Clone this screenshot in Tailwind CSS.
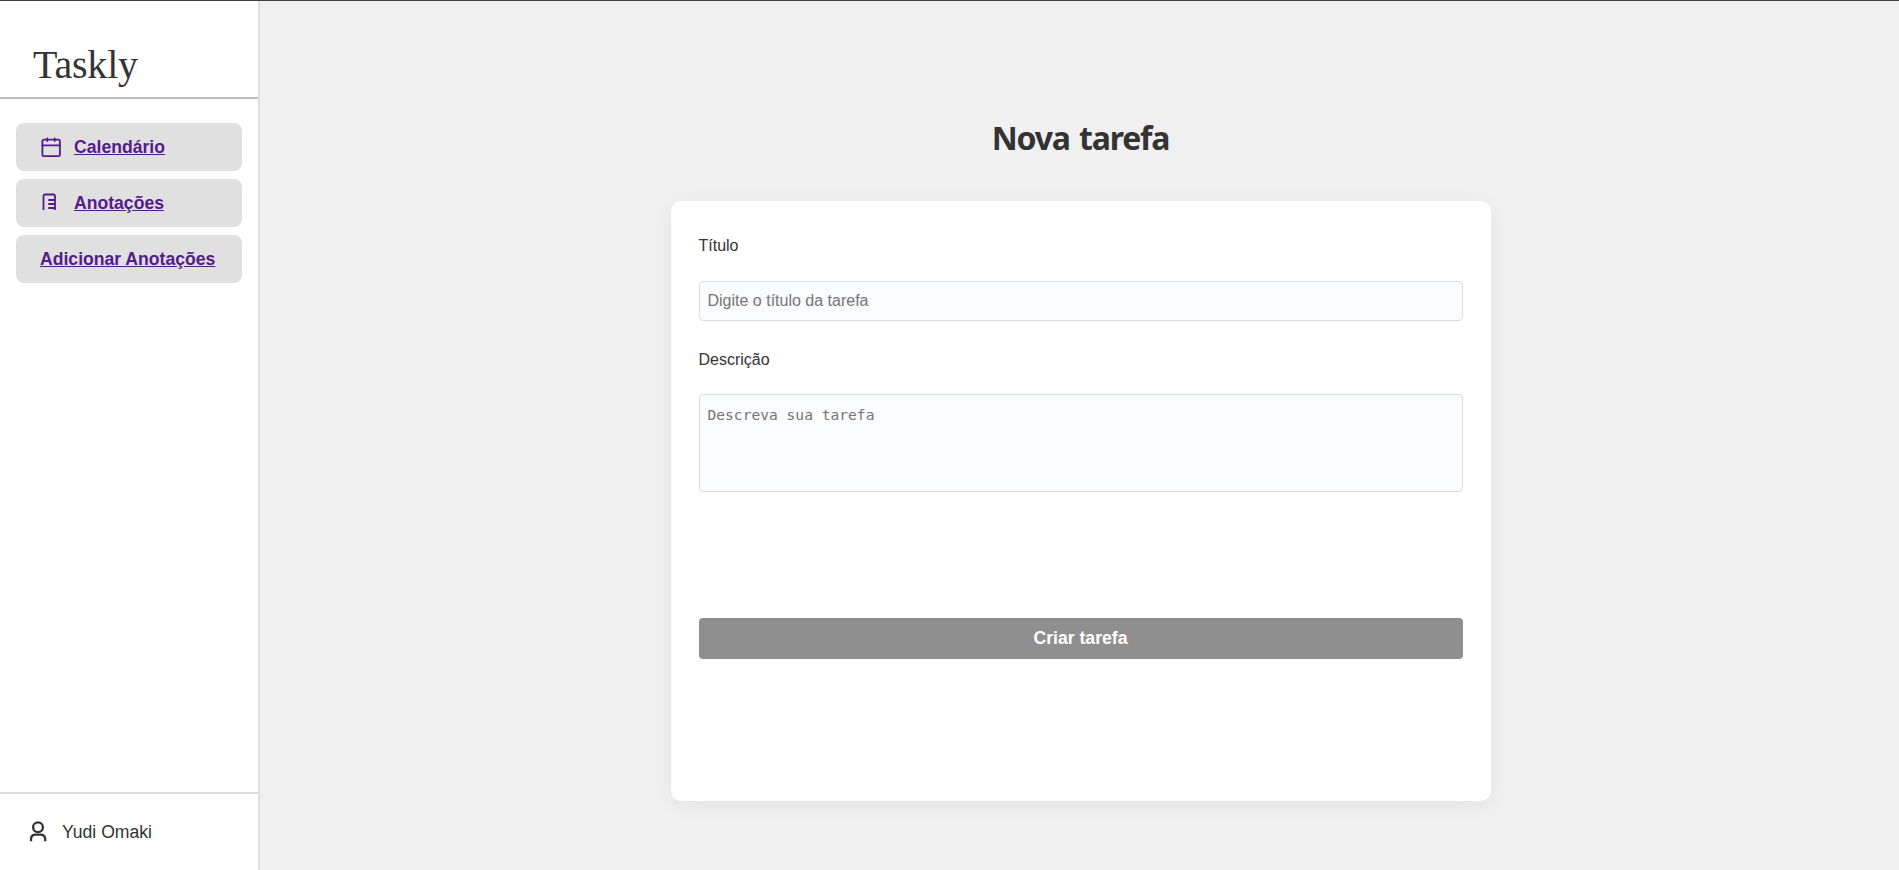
<!DOCTYPE html>
<html lang="pt-BR">
<head>
<meta charset="UTF-8">
<title>Taskly</title>
<script src="https://cdn.jsdelivr.net/npm/@tailwindcss/browser@4"></script>
</head>
<body class="h-[870px] overflow-hidden border-t border-[#444146] bg-[#f0f0f0] font-['Liberation_Sans',Arial,sans-serif] text-[#333333] flex">
  <aside class="w-[260px] shrink-0 h-full bg-white border-r-2 border-[#e0e0e0] flex flex-col">
    <header class="h-[98px] shrink-0 border-b-2 border-[#bdbdbd] pl-[33px] pt-[41px]">
      <h1 class="font-['Liberation_Serif','Times_New_Roman',serif] text-[40px] leading-[46px] tracking-[-0.2px]">Taskly</h1>
    </header>
    <nav class="flex flex-col gap-2 px-4 pt-6 text-[17.6px] font-bold text-[#551a8b]">
      <a class="h-12 rounded-lg bg-[#e0e0e0] pl-6 flex items-center" href="#">
        <svg class="w-[22px] h-6 mr-3 shrink-0" viewBox="0 0 22 24" fill="none" stroke="currentColor" stroke-width="1.8" stroke-linecap="round" stroke-linejoin="round"><rect x="2.4" y="4.7" width="17.5" height="16.5" rx="1.5"/><path d="M2.400 10.400H19.900M7.300 3.400V6M14.700 3.400V6"/></svg>
        <span class="underline">Calendário</span>
      </a>
      <a class="h-12 rounded-lg bg-[#e0e0e0] pl-6 flex items-center" href="#">
        <svg class="w-[22px] h-6 mr-3 shrink-0" viewBox="0 0 22 24" fill="none" stroke="currentColor" stroke-width="1.8"><path d="M3.500 19V5.200Q3.500 3.500 5.200 3.500H13.300Q15 3.500 15 5.200V19M15 9H8.200M15 13H8.200M15 17H8.200"/></svg>
        <span class="underline">Anotações</span>
      </a>
      <a class="h-12 rounded-lg bg-[#e0e0e0] pl-6 flex items-center" href="#"><span class="underline">Adicionar Anotações</span></a>
    </nav>
    <footer class="mt-auto h-[78px] shrink-0 border-t-2 border-[#e0e0e0] pl-[26px] flex items-center text-[17.6px]">
      <svg class="w-6 h-6 mr-3 shrink-0" viewBox="0 0 24 24" fill="none" stroke="currentColor" stroke-width="2.3"><circle cx="12" cy="7.300" r="4.900"/><path d="M5 21.300V19.300Q5 14.600 9.700 14.600H14.500Q19.200 14.600 19.200 19.300V21.300"/></svg>
      <span>Yudi Omaki</span>
    </footer>
  </aside>
  <main class="flex-1 flex flex-col items-center pl-[2px]">
    <h2 class="mt-[115px] h-[44px] leading-[44px] text-[32px] font-bold tracking-[-1.2px] [word-spacing:2.2px] font-['Noto_Sans',sans-serif]">Nova tarefa</h2>
    <form class="mt-[41px] w-[820px] h-[600px] rounded-[10px] bg-white px-7 pt-[36px] flex flex-col shadow-[0_4px_20px_rgba(0,0,0,0.06)]">
      <label class="text-[16px] leading-[18px]">Título</label>
      <input class="mt-[26px] h-10 w-full shrink-0 rounded border border-[#dcdcdc] bg-[#f9fbfd] px-2 text-[16px] placeholder:text-[#757575]" placeholder="Digite o título da tarefa">
      <label class="mt-[30px] text-[16px] leading-[18px]">Descrição</label>
      <textarea class="mt-[25px] h-[98px] w-full shrink-0 resize-none rounded border border-[#dcdcdc] bg-[#f9fbfd] px-2 py-[10px] font-['DejaVu_Sans_Mono',monospace] text-[14.6px] leading-[19px] placeholder:text-[#757575]" placeholder="Descreva sua tarefa"></textarea>
      <button type="button" class="mt-[126px] h-[41px] w-full shrink-0 rounded bg-[#8f8f8f] text-[17.6px] font-bold text-white">Criar tarefa</button>
    </form>
  </main>
</body>
</html>
